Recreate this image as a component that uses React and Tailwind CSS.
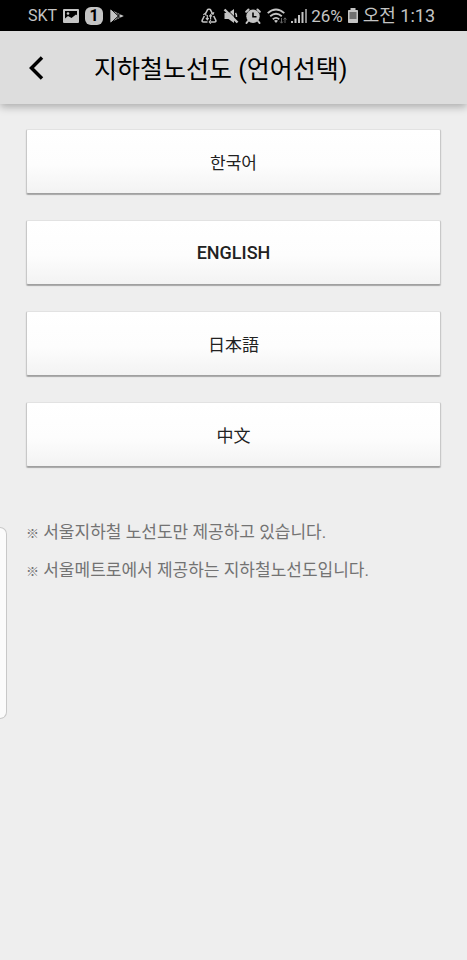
const LANGUAGES = [
  { code: 'ko', label: '한국어', font: 'pt-1 text-[17px] font-["Roboto","Noto_Sans_CJK_KR",sans-serif]' },
  { code: 'en', label: 'ENGLISH', font: 'text-[18px] font-["Roboto","Noto_Sans_CJK_KR",sans-serif] font-medium' },
  { code: 'ja', label: '日本語', font: 'text-[17px] font-["Noto_Sans_CJK_JP",sans-serif]' },
  { code: 'zh', label: '中文', font: 'text-[17px] font-["Noto_Sans_CJK_SC",sans-serif]' },
];

const NOTES = [
  '서울지하철 노선도만 제공하고 있습니다.',
  '서울메트로에서 제공하는 지하철노선도입니다.',
];

function PictureIcon() {
  return (
    <svg className="h-4 w-4" viewBox="0 0 16 16" aria-hidden="true">
      <path fill="currentColor" fillRule="evenodd" d="M1 1h14q1 0 1 1v12q0 1-1 1H1q-1 0-1-1V2q0-1 1-1ZM2 3v7.500l3-2.500 3.500 2L13 6.500l1 .8V3H2Z" />
      <circle cx="5" cy="5.500" r="1.300" fill="currentColor" />
    </svg>
  );
}

function PlayStoreIcon() {
  return (
    <svg className="h-4 w-4" viewBox="0 0 16 16" aria-hidden="true">
      <path d="M1.300 1.500 14.800 8 1.300 14.500Z" fill="currentColor" />
      <path d="m3 2 8.500 8M3 14l8.500-8" stroke="#000" strokeWidth="1" />
      <path d="M7.700 5.200 10 7.300M7.700 10.800 10 8.700" stroke="#000" strokeWidth="1" />
    </svg>
  );
}

function DataSaverIcon() {
  return (
    <svg className="h-4 w-4" viewBox="0 0 16 16" fill="none" stroke="currentColor" strokeWidth="1.600" aria-hidden="true">
      <path d="m4.300 6 2.200-4.200q.4-.6 1-.6h1q.6 0 1 .6L11.700 6" />
      <path d="M3.300 8 1.200 12.200q-.5 1.800 1.300 1.800h4M12.700 8l2.100 4.200q.5 1.800-1.300 1.800h-4" />
      <path d="M2.300 6.800 4.300 5.500l1 2.300M10 5.500l2 .8.900-2M9.800 12.200 8.300 14l1.500 1.600" strokeWidth="1.200" />
      <path d="M6.300 7v4.500M9.600 7v4.500M4.900 10l1.400 1.800L7.700 10M8.200 8.500l1.400-1.800L11 8.500" strokeWidth="1.200" />
    </svg>
  );
}

function MuteIcon() {
  return (
    <svg className="h-4 w-4" viewBox="0 0 16 16" aria-hidden="true">
      <path d="M1.500 5h4l5.500-4v14l-5.500-4h-4Z" fill="currentColor" />
      <path d="M3 .5 16 13.500" stroke="#000" strokeWidth="1" />
      <path d="m1.500 1.500 13 13" stroke="currentColor" strokeWidth="2.400" />
      <path d="M12.500 5q1.200 1.500 1 4" fill="none" stroke="currentColor" strokeWidth="1.500" />
    </svg>
  );
}

function AlarmIcon() {
  return (
    <svg className="h-4 w-4" viewBox="0 0 16 16" aria-hidden="true">
      <circle cx="8" cy="8.300" r="6.700" fill="currentColor" />
      <path d="M1.200 3.800 3.500 1.500M14.800 3.800 12.500 1.500M3 13l-1.500 2M13 13l1.500 2" stroke="currentColor" strokeWidth="2" strokeLinecap="round" />
      <path d="M8 4.500v4.300h3.500" fill="none" stroke="#000" strokeWidth="1.600" />
    </svg>
  );
}

function WifiIcon() {
  return (
    <svg className="h-4 w-5" viewBox="0 0 20 16" fill="none" stroke="currentColor" strokeWidth="1.800" aria-hidden="true">
      <path d="M.7 5.200q8.300-7.400 16.600 0M3.200 8.300q5.800-5 11.600 0M5.800 11.200q3.200-2.600 6.400 0" />
      <path d="m7 12.800 2 2.200 2-2.200q-2-1.400-4 0Z" fill="currentColor" stroke="none" />
      <g stroke="#666" strokeWidth="1">
        <path d="M14.500 10v5M13 13.500l1.500 1.700 1.500-1.700M18 15v-5M16.600 11.500 18 9.800l1.400 1.700" />
      </g>
    </svg>
  );
}

function SignalIcon() {
  return (
    <svg className="h-4 w-4" viewBox="0 0 16 16" fill="currentColor" aria-hidden="true">
      <path d="M0 13h2v2H0ZM3.500 10.500h2V15h-2ZM7 7h2v8H7ZM10.500 4h2v11h-2Z" />
      <path d="M14 1h2v14h-2Z" fill="#888" />
    </svg>
  );
}

function BatteryIcon() {
  return (
    <svg className="h-4 w-3" viewBox="0 0 12 16" aria-hidden="true">
      <path d="M3.500 0h5v2h1.700Q11 2 11 2.800v11.400q0 .8-.8.800H1.800Q1 15 1 14.200V2.800Q1 2 1.800 2h1.700Z" fill="currentColor" />
      <path d="M2.500 4h7v7h-7Z" fill="#707070" />
    </svg>
  );
}

function StatusBar() {
  return (
    <div className="flex h-[31px] items-center justify-between bg-black pr-8 pl-7 text-base leading-6 text-[#c4c4c4]">
      <div className="flex items-center gap-[6px]">
        <span>SKT</span>
        <PictureIcon />
        <span className="flex h-[18px] w-[18px] items-center justify-center rounded-[6px] bg-[#c4c4c4] text-base font-bold text-black">1</span>
        <PlayStoreIcon />
      </div>
      <div className="flex items-center gap-1">
        <div className="flex items-center gap-[6px]">
          <DataSaverIcon />
          <MuteIcon />
          <AlarmIcon />
          <WifiIcon />
        </div>
        <SignalIcon />
        <span className="text-[17px]">26%</span>
        <BatteryIcon />
        <span className="whitespace-nowrap text-[18px]">오전 1:13</span>
      </div>
    </div>
  );
}

function Header() {
  return (
    <header className="flex h-[73px] items-center bg-[#ddd] shadow-[0_3px_8px_rgba(0,0,0,0.28)]">
      <button type="button" aria-label="뒤로" className="flex h-12 w-[72px] items-center justify-center text-black">
        <svg className="h-6 w-4" viewBox="0 0 16 24" fill="none" stroke="currentColor" strokeWidth="3.500" aria-hidden="true">
          <path d="M14 1.500 3.500 12 14 22.500" />
        </svg>
      </button>
      <h1 className="pt-1 pl-[22px] text-[25px] leading-9 text-black">지하철노선도 (언어선택)</h1>
    </header>
  );
}

export default function App() {
  return (
    <div className='relative min-h-screen bg-[#eee] font-["Roboto","Noto_Sans_CJK_KR",sans-serif]'>
      <StatusBar />
      <Header />
      <main className="px-[26px] pt-[25px]">
        <div className="flex flex-col gap-[27px]">
          {LANGUAGES.map(({ code, label, font }) => (
            <button
              key={code}
              type="button"
              lang={code}
              className={`h-[65px] w-full rounded-[2px] border border-t-[#e2e2e2] border-r-[#c8c8c8] border-b-[#a0a0a0] border-l-[#c8c8c8] bg-linear-to-b from-white from-0% via-[#fdfdfd] via-55% to-[#f3f3f3] text-[#222] shadow-[0_1px_1px_rgba(0,0,0,0.3)] -mb-px ${font}`}
            >
              {label}
            </button>
          ))}
        </div>
        <div className="mt-[47px] text-[17px] leading-[38px] text-[#737373]">
          {NOTES.map((note) => (
            <p key={note}>
              <span className="text-[13px] leading-none">※</span> {note}
            </p>
          ))}
        </div>
      </main>
      <div className="absolute top-[527px] left-0 h-48 w-[7px] rounded-r-[7px] border border-l-0 border-[#c8c8c8] bg-[#fbfbfb]" />
    </div>
  );
}
